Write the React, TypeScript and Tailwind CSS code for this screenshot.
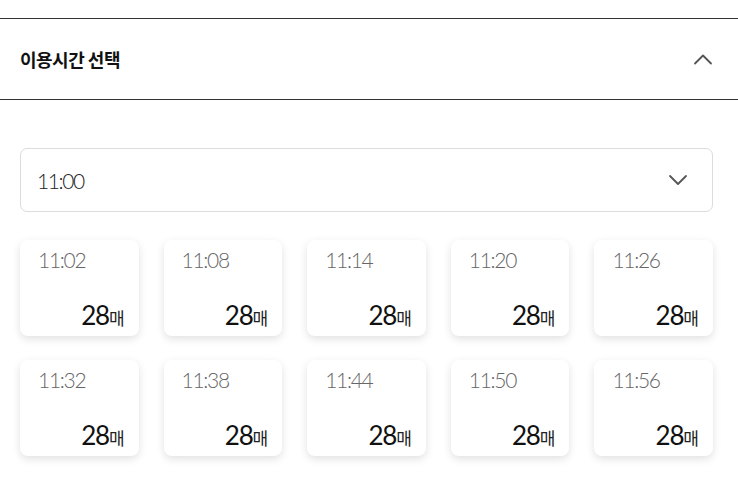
import React from "react";

const times = [
  "11:02", "11:08", "11:14", "11:20", "11:26",
  "11:32", "11:38", "11:44", "11:50", "11:56",
];

function ChevronUp() {
  return (
    <svg width="20" height="12" viewBox="0 0 20 12" fill="none">
      <path d="M2 10.5 L10 2.5 L18 10.5" stroke="#555" strokeWidth="1.8" strokeLinecap="round" strokeLinejoin="round" />
    </svg>
  );
}

function ChevronDown() {
  return (
    <svg width="20" height="12" viewBox="0 0 20 12" fill="none">
      <path d="M2 2 L10 10 L18 2" stroke="#555" strokeWidth="1.8" strokeLinecap="round" strokeLinejoin="round" />
    </svg>
  );
}

export default function App() {
  return (
    <div className="w-[738px] h-[477px] bg-white overflow-hidden pt-[18px]">
      <div className="border-t border-b border-[#333] h-[82px] flex items-center justify-between pl-5 pr-[25px]">
        <span className="text-[18px] font-bold text-[#111] tracking-[-0.5px] [font-family:'Noto_Sans_CJK_KR',sans-serif]">
          이용시간 선택
        </span>
        <ChevronUp />
      </div>
      <div className="pl-5 pr-[25px] pt-12">
        <div className="h-[64px] border border-[#dcdcdc] rounded-[7px] flex items-center justify-between pl-4 pr-6">
          <span className="text-[21px] font-light text-[#222] tracking-[-1.4px] [font-family:Lato,sans-serif] leading-none">11:00</span>
          <ChevronDown />
        </div>
        <div className="grid grid-cols-5 gap-x-[25px] gap-y-6 mt-[28px]">
          {times.map((t) => (
            <div
              key={t}
              className="h-[96px] bg-white rounded-[8px] shadow-[0_3px_8px_rgba(0,0,0,0.12)] flex flex-col justify-between pl-[18px] pr-[14px] pt-[9px] pb-2"
            >
              <span className="text-[21px] font-light text-[#666] tracking-[-1.3px] [font-family:Lato,sans-serif] leading-none">
                {t}
              </span>
              <div className="flex items-baseline justify-end leading-none">
                <span className="text-[26px] font-normal text-[#111] tracking-[-1.2px] [font-family:Lato,sans-serif] leading-none">28</span>
                <span className="text-[17px] text-[#222] [font-family:'Noto_Sans_CJK_KR',sans-serif] leading-none">매</span>
              </div>
            </div>
          ))}
        </div>
      </div>
    </div>
  );
}
